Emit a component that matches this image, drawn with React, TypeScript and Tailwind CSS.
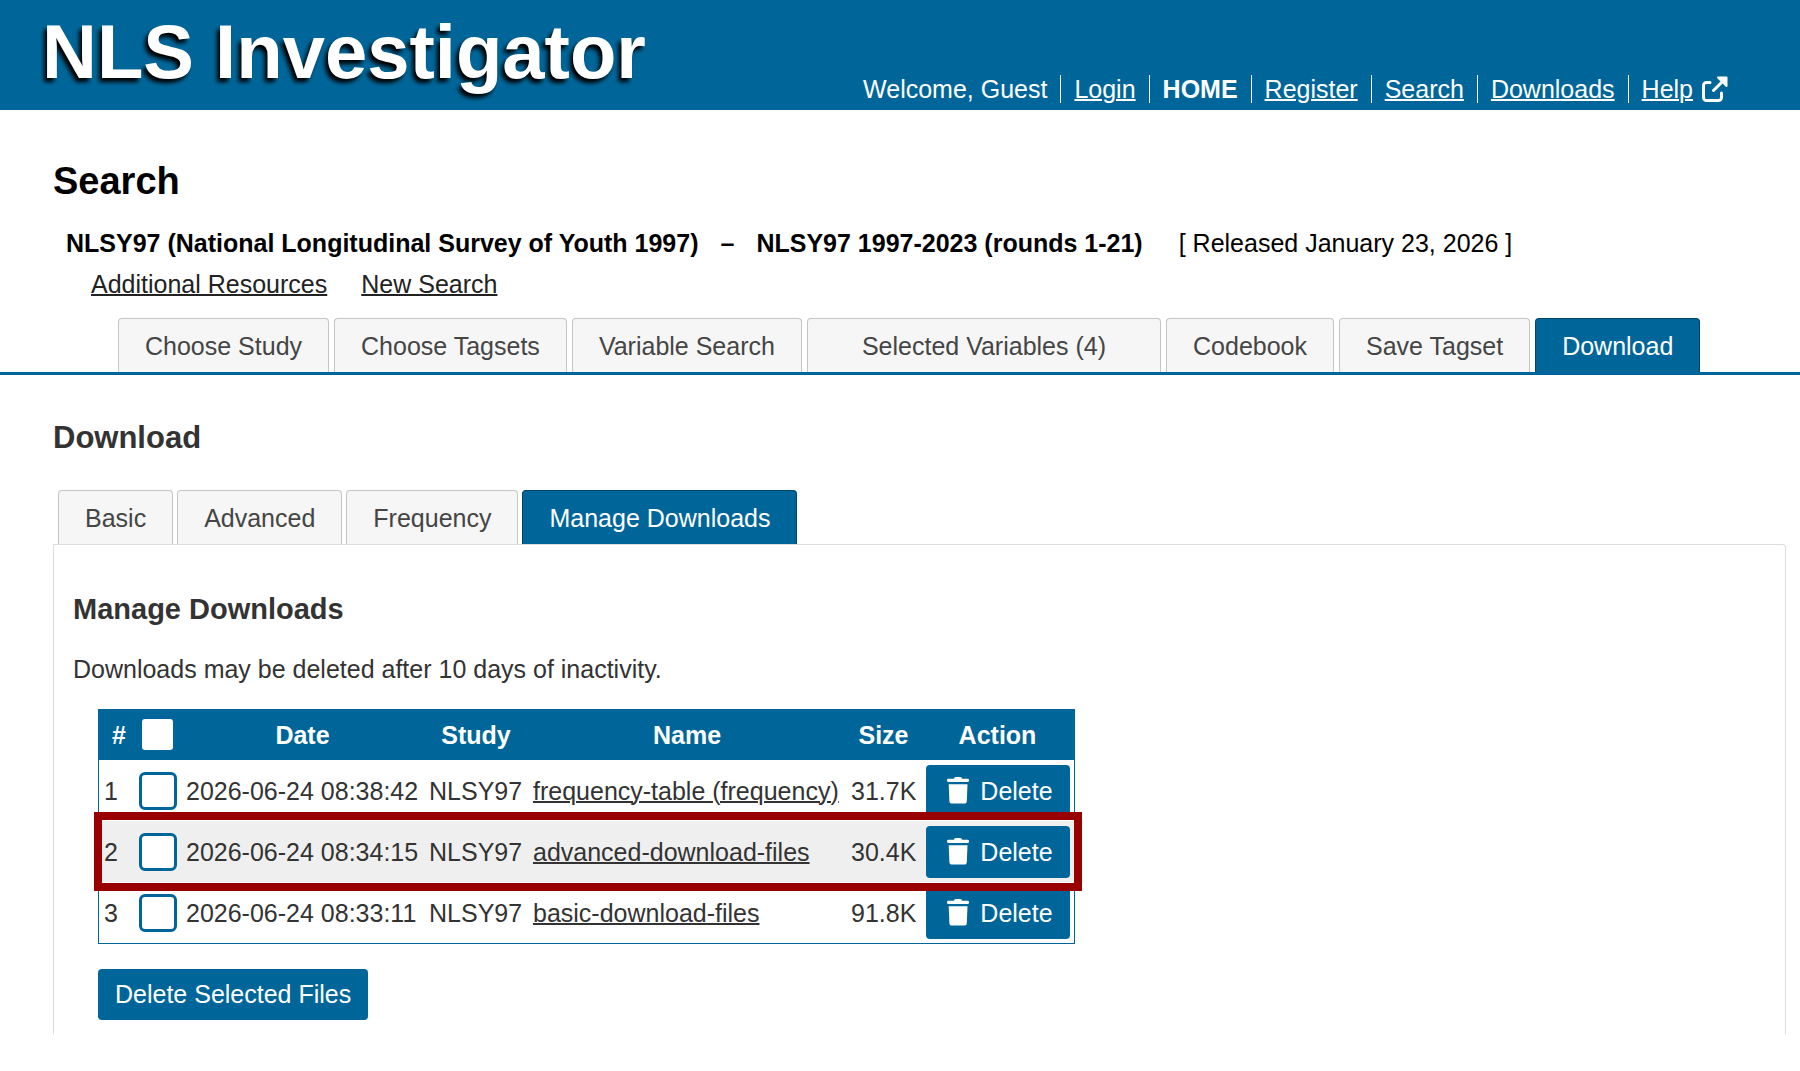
import { useState } from 'react';
import clsx from 'clsx';

const NAV_LINKS = ['Register', 'Search', 'Downloads'];

const MAIN_TABS = [
  { label: 'Choose Study' },
  { label: 'Choose Tagsets' },
  { label: 'Variable Search' },
  { label: 'Selected Variables (4)', wide: true },
  { label: 'Codebook' },
  { label: 'Save Tagset' },
  { label: 'Download' },
];

const SUB_TABS = [
  { label: 'Basic' },
  { label: 'Advanced' },
  { label: 'Frequency' },
  { label: 'Manage Downloads' },
];

const FILES = [
  { id: 1, date: '2026-06-24 08:38:42', study: 'NLSY97', name: 'frequency-table (frequency)', size: '31.7K' },
  { id: 2, date: '2026-06-24 08:34:15', study: 'NLSY97', name: 'advanced-download-files', size: '30.4K' },
  { id: 3, date: '2026-06-24 08:33:11', study: 'NLSY97', name: 'basic-download-files', size: '91.8K' },
];

const HIGHLIGHTED = 2;

function ExternalIcon() {
  return (
    <svg width="26" height="26" viewBox="0 0 26 26" fill="none" stroke="currentColor" strokeWidth="3" strokeLinecap="round" strokeLinejoin="round" aria-hidden="true">
      <path d="M8 6.500H4.500a3 3 0 0 0-3 3v12a3 3 0 0 0 3 3h12a3 3 0 0 0 3-3V17" />
      <path d="M11.500 14.500 22 4" />
      <path d="M16 1.500h8.500V10z" fill="currentColor" strokeWidth="2" />
    </svg>
  );
}

function TrashIcon() {
  return (
    <svg width="22" height="27" viewBox="0 0 22 27" fill="currentColor" aria-hidden="true">
      <path d="M7 1.400Q7.500 0 9 0h4q1.500 0 2 1.400L15.200 1.800H20.500a1.600 1.600 0 0 1 0 3.200h-19a1.600 1.600 0 0 1 0-3.200H6.800z" />
      <path d="M1.700 7.300h18.800l-.7 16.700a2.700 2.700 0 0 1-2.700 2.600H5.100A2.700 2.700 0 0 1 2.400 24z" />
    </svg>
  );
}

type TabsProps = {
  tabs: { label: string; wide?: boolean }[];
  active: string;
  onSelect: (label: string) => void;
  className?: string;
};

function Tabs({ tabs, active, onSelect, className }: TabsProps) {
  return (
    <div role="tablist" className={clsx('flex', className)}>
      {tabs.map((t) => (
        <button
          key={t.label}
          role="tab"
          aria-selected={t.label === active}
          onClick={() => onSelect(t.label)}
          className={clsx(
            'rounded-t border border-b-0 pt-[13px] pb-3 leading-7 whitespace-nowrap',
            t.wide ? 'px-[54px]' : 'px-[26px]',
            t.label === active
              ? 'border-[#004466] bg-[#006699] text-white'
              : 'border-[#c5c5c5] bg-[#f6f6f6] text-[#454545]',
          )}
        >
          {t.label}
        </button>
      ))}
    </div>
  );
}

export default function App() {
  const [mainTab, setMainTab] = useState('Download');
  const [subTab, setSubTab] = useState('Manage Downloads');
  const [selected, setSelected] = useState<number[]>([]);

  const allSelected = selected.length === FILES.length;
  const toggle = (id: number) =>
    setSelected((prev) => (prev.includes(id) ? prev.filter((x) => x !== id) : [...prev, id]));

  return (
    <div className="bg-white font-['Liberation_Sans',Arial,sans-serif] text-[25px] leading-7 text-[#333333]">
      <header className="flex items-end justify-between bg-[#006699] pt-[14px] pr-[72px] pl-[42px] text-white">
        <div className="mb-5 text-[76px] leading-none font-bold whitespace-nowrap [text-shadow:-3px_4px_4px_#000]">
          NLS Investigator
        </div>
        <nav className="mb-[7px] flex whitespace-nowrap">
          <span className="pr-[13px]">Welcome, Guest</span>
          <span className="border-l border-white px-[13px]">
            <a href="#login" className="underline decoration-2">Login</a>
          </span>
          <span className="border-l border-white px-[13px]">
            <a href="#home" className="font-bold">HOME</a>
          </span>
          {NAV_LINKS.map((l) => (
            <span key={l} className="border-l border-white px-[13px]">
              <a href={`#${l.toLowerCase()}`} className="underline decoration-2">{l}</a>
            </span>
          ))}
          <span className="flex items-center gap-[9px] border-l border-white pl-[13px]">
            <a href="#help" className="underline decoration-2">Help</a>
            <ExternalIcon />
          </span>
        </nav>
      </header>

      <section className="pt-[49px]">
        <h1 className="px-[53px] text-[38px] leading-[44px] font-bold text-black">Search</h1>
        <div className="mt-[26px] flex px-[66px] whitespace-nowrap text-black">
          <strong>NLSY97 (National Longitudinal Survey of Youth 1997)</strong>
          <strong className="px-[22px]">–</strong>
          <strong>NLSY97 1997-2023 (rounds 1-21)</strong>
          <span className="pl-9">[ Released January 23, 2026 ]</span>
        </div>
        <div className="mt-[13px] flex gap-[34px] px-[91px] text-[#222222]">
          <a href="#resources" className="underline decoration-2">Additional Resources</a>
          <a href="#new-search" className="underline decoration-2">New Search</a>
        </div>
        <Tabs
          tabs={MAIN_TABS}
          active={mainTab}
          onSelect={setMainTab}
          className="mt-5 gap-[5px] border-b-[3px] border-[#006699] pl-[118px]"
        />
      </section>

      <main className="pt-[45px] pr-[14px] pl-[53px]">
        <h2 className="text-[31px] leading-9 font-bold">Download</h2>
        <Tabs tabs={SUB_TABS} active={subTab} onSelect={setSubTab} className="mt-[34px] gap-1 pl-[5px]" />

        <div className="rounded-tr border border-b-0 border-[#dddddd] pt-12 pr-5 pb-[14px] pl-[19px]">
          <h3 className="text-[29px] leading-8 font-bold">Manage Downloads</h3>
          <p className="mt-[30px]">Downloads may be deleted after 10 days of inactivity.</p>

          <div className="mt-[26px] ml-[25px]">
            <table className="w-[977px] table-fixed border-separate border-spacing-0 border border-t-0 border-[#006699] whitespace-nowrap">
              <thead>
                <tr className="h-[51px] bg-[#006699] text-white">
                  <th className="w-[35px] pl-[5px]">#</th>
                  <th className="w-[47px]">
                    <input
                      type="checkbox"
                      aria-label="Select all files"
                      checked={allSelected}
                      onChange={() => setSelected(allSelected ? [] : FILES.map((f) => f.id))}
                      className="mx-auto block size-[31px] appearance-none rounded-[3px] bg-white checked:bg-[#99ccdd]"
                    />
                  </th>
                  <th className="w-[243px]">Date</th>
                  <th className="w-[104px]">Study</th>
                  <th className="w-[318px]">Name</th>
                  <th className="w-[75px]">Size</th>
                  <th className="w-[153px]">Action</th>
                </tr>
              </thead>
              <tbody>
                {FILES.map((f) => (
                  <tr key={f.id} className={clsx('relative h-[61px]', f.id % 2 === 0 && 'bg-[#efefef]')}>
                    <td className="pl-[5px]">{f.id}</td>
                    <td>
                      <input
                        type="checkbox"
                        aria-label={`Select ${f.name}`}
                        checked={selected.includes(f.id)}
                        onChange={() => toggle(f.id)}
                        className="mx-auto block size-[38px] appearance-none rounded-md border-3 border-[#006699] bg-white checked:bg-[#006699]"
                      />
                    </td>
                    <td className="pl-[5px]">{f.date}</td>
                    <td className="pl-[5px]">{f.study}</td>
                    <td className="pl-[5px]">
                      <a href={`#file-${f.id}`} className="underline decoration-2">{f.name}</a>
                    </td>
                    <td className="pl-[5px]">{f.size}</td>
                    <td className="pr-1 pl-[5px]">
                      <button className="flex h-[52px] w-full items-center justify-center gap-[11px] rounded bg-[#006699] pl-1 text-white">
                        <TrashIcon />
                        Delete
                      </button>
                      {f.id === HIGHLIGHTED && (
                        <div className="pointer-events-none absolute -top-[9px] -right-2 -bottom-[9px] -left-[5px] z-10 border-8 border-[#990000]" />
                      )}
                    </td>
                  </tr>
                ))}
              </tbody>
            </table>
            <button className="mt-[25px] rounded bg-[#006699] px-[17px] pt-[11px] pb-3 text-white">
              Delete Selected Files
            </button>
          </div>
        </div>
      </main>
    </div>
  );
}
